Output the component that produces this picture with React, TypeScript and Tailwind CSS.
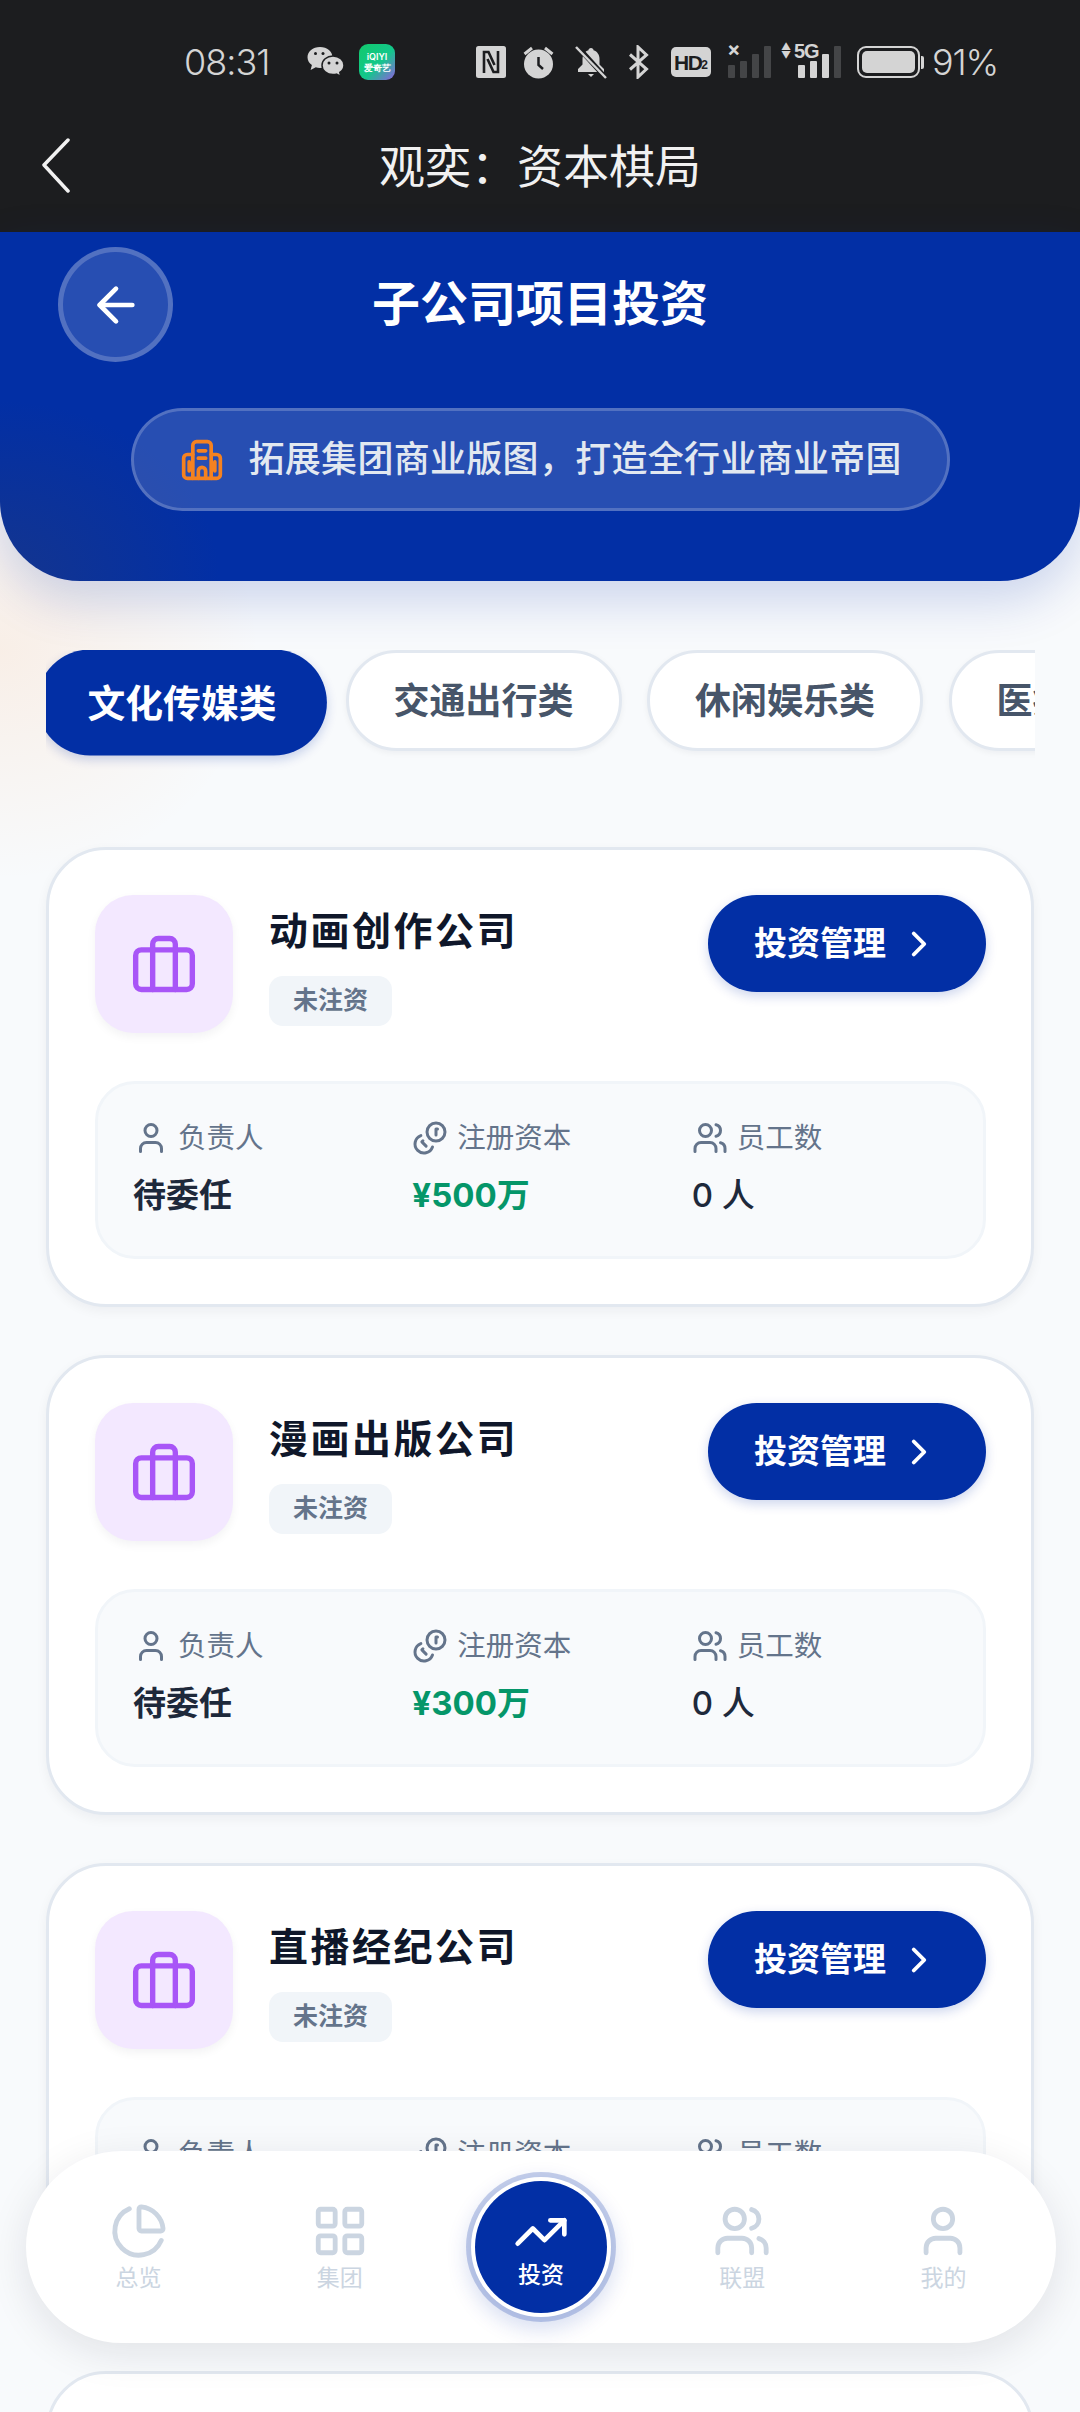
import { ArrowLeft, ChevronRight, Coins, User, Users, TrendingUp, ChartPie, LayoutGrid } from "lucide-react";

const FONT = "font-['Inter','Noto_Sans_CJK_SC',sans-serif]";

function Wechat() {
  return (
    <svg width="40" height="34" viewBox="0 0 40 34" className="shrink-0">
      <path d="M14 2C6.8 2 1.5 6.6 1.5 12.2c0 3.2 1.7 6 4.4 7.9L4.6 25l5.2-2.7c1.3.4 2.7.6 4.2.6 7.2 0 12.5-4.7 12.5-10.7C26.500 6.600 21.200 2 14 2z" fill="#d4d4d4" />
      <path d="M27 11c-6.300 0-11 4.100-11 9.300s4.700 9.300 11 9.300c1.200 0 2.400-.2 3.500-.5l4.300 2.400-1-4.100c2.700-1.700 4.200-4.200 4.200-7.100C38 15.100 33.300 11 27 11z" fill="#d4d4d4" stroke="#1c1d1f" strokeWidth="1.5" />
      <circle cx="9.500" cy="8.500" r="1.500" fill="#1c1d1f" />
      <circle cx="17" cy="8.500" r="1.500" fill="#1c1d1f" />
      <circle cx="23" cy="18" r="1.500" fill="#1c1d1f" />
      <circle cx="31" cy="18" r="1.500" fill="#1c1d1f" />
    </svg>
  );
}

function Iqiyi() {
  return (
    <div className="flex h-[36px] w-[36px] shrink-0 flex-col items-center justify-center rounded-[9px] bg-[linear-gradient(135deg,#12c96c_0%,#13c78b_55%,#8f5fe0_100%)] text-white">
      <span className="text-[9px] leading-[11px] font-semibold">iQIYI</span>
      <span className="text-[9px] leading-[11px] font-bold">爱奇艺</span>
    </div>
  );
}

function Nfc() {
  return (
    <svg width="30" height="32" viewBox="0 0 30 32" className="shrink-0">
      <rect x="0" y="0" width="30" height="32" rx="2.500" fill="#d4d4d4" />
      <path d="M8 27V6h4.500l6 13" fill="none" stroke="#1c1d1f" strokeWidth="2.600" />
      <path d="M22 5v21h-4.500l-6-13" fill="none" stroke="#1c1d1f" strokeWidth="2.600" />
    </svg>
  );
}

function Alarm() {
  return (
    <svg width="31" height="34" viewBox="0 0 31 34" className="shrink-0">
      <circle cx="15.500" cy="19" r="14.500" fill="#d4d4d4" />
      <path d="M15.500 12v8l4.500 4" fill="none" stroke="#1c1d1f" strokeWidth="2.500" />
      <path d="M1.500 9 9 3M29.500 9 22 3" stroke="#d4d4d4" strokeWidth="3" />
    </svg>
  );
}

function BellOff() {
  return (
    <svg width="32" height="34" viewBox="0 0 32 34" className="shrink-0">
      <path d="M16 3c-1.500 0-2.500 1-2.500 2.200C9.500 6.500 7.500 10 7.500 14v5.500L3 24v3h26v-3l-4.500-4.500V14c0-4-2-7.500-6-8.800C18.500 4 17.500 3 16 3z" fill="#d4d4d4" />
      <path d="M13 29h6l-3 3z" fill="#d4d4d4" />
      <path d="M2 1 31 33" stroke="#1c1d1f" strokeWidth="5" />
      <path d="M1 2 31 33" stroke="#d4d4d4" strokeWidth="2.500" />
    </svg>
  );
}

function Bluetooth() {
  return (
    <svg width="21" height="34" viewBox="0 0 21 34" className="shrink-0">
      <path d="M2 9.500 18.500 24 10 32V2l8.500 8L2 24.500" fill="none" stroke="#d4d4d4" strokeWidth="3" />
    </svg>
  );
}

function Hd() {
  return (
    <div className="flex h-[30px] w-[40px] shrink-0 items-center justify-center rounded-[5px] bg-[#d4d4d4] text-[#1c1d1f] font-['Liberation_Sans',sans-serif]">
      <span className="text-[21px] leading-none font-bold tracking-[-1.500px]">HD</span>
      <span className="mt-[5px] text-[12px] leading-none font-bold">2</span>
    </div>
  );
}

function Bars({ on }: { on: number }) {
  const hs = [13, 17, 24, 32];
  return (
    <div className="flex items-end gap-[5px]">
      {hs.map((h, i) => (
        <div key={i} style={{ height: h }} className={i < on ? "w-[7px] rounded-[1px] bg-[#d4d4d4]" : "w-[7px] rounded-[1px] bg-[#444547]"} />
      ))}
    </div>
  );
}

function StatusBar() {
  return (
    <div className="flex h-[124px] items-center pl-[184px] text-[#d4d4d4] font-['Inter',sans-serif]">
      <span className="w-[88px] text-[36px] leading-none font-light tracking-[-1px]">08:31</span>
      <div className="ml-[34px]"><Wechat /></div>
      <div className="ml-[13px]"><Iqiyi /></div>
      <div className="ml-[81px]"><Nfc /></div>
      <div className="ml-[17px]"><Alarm /></div>
      <div className="ml-[21px]"><BellOff /></div>
      <div className="ml-[21px]"><Bluetooth /></div>
      <div className="ml-[22px]"><Hd /></div>
      <div className="relative ml-[17px] h-[32px] w-[43px]">
        <div className="absolute bottom-0 left-0"><Bars on={0} /></div>
        <span className="absolute left-[-1px] top-[-7px] text-[20px] leading-none font-bold">×</span>
      </div>
      <div className="relative ml-[10px] flex h-[32px] w-[60px] justify-end">
        <div className="mt-auto"><Bars on={3} /></div>
        <span className="absolute left-[0px] top-[-4px] text-[10px] leading-[9px]">▲<br />▼</span>
        <span className="absolute left-[13px] top-[-5px] text-[20px] leading-none font-bold tracking-[-1px] font-['Liberation_Sans',sans-serif]">5G</span>
      </div>
      <div className="ml-[16px] flex items-center">
        <div className="h-[32px] w-[63px] rounded-[9px] border-[2px] border-[#d4d4d4] p-[3px]">
          <div className="h-full w-full rounded-[5px] bg-[#d4d4d4]" />
        </div>
        <div className="ml-[1px] h-[13px] w-[3px] rounded-r-[2px] bg-[#d4d4d4]" />
      </div>
      <span className="ml-[8px] text-[36px] leading-none font-light tracking-[-1.200px]">91%</span>
    </div>
  );
}

function BuildingIcon() {
  return (
    <svg width="46" height="44" viewBox="0 0 24 24" fill="none" stroke="#f58220" strokeWidth="2" strokeLinecap="round" strokeLinejoin="round" className="shrink-0">
      <path d="M7 22V4a2 2 0 0 1 2-2h6a2 2 0 0 1 2 2v18" />
      <path d="M7 9H4a2 2 0 0 0-2 2v9a2 2 0 0 0 2 2h16a2 2 0 0 0 2-2v-9a2 2 0 0 0-2-2h-3" />
      <path d="M10 7h4M10 11h4M10 22v-4a2 2 0 0 1 4 0v4M5 13v5M19 13v5" />
    </svg>
  );
}

function BagIcon() {
  return (
    <svg width="68" height="68" viewBox="0 0 24 24" fill="none" stroke="#a855f7" strokeWidth="1.900" strokeLinecap="round" strokeLinejoin="round">
      <rect x="2" y="7" width="20" height="14" rx="2" />
      <path d="M16 21V5a2 2 0 0 0-2-2h-4a2 2 0 0 0-2 2v16" />
    </svg>
  );
}

function Info({ icon, label, value, valueClass }: { icon: React.ReactNode; label: string; value: string; valueClass: string }) {
  return (
    <div className="flex flex-col">
      <div className="flex h-[36px] items-center gap-[9px] text-[#64748b]">
        {icon}
        <span className="text-[28.500px] leading-none">{label}</span>
      </div>
      <div className={`mt-[21px] text-[33px] leading-[36px] ${valueClass}`}>{value}</div>
    </div>
  );
}

function Card({ name, capital }: { name: string; capital: string }) {
  return (
    <div className="h-[460px] shrink-0 rounded-[60px] border-[3px] border-[#e2e8f0] bg-white pl-[46px] pr-[45px] pt-[45px] shadow-[0_4px_12px_rgba(15,23,42,0.05)]">
      <div className="flex items-start">
        <div className="flex h-[138px] w-[138px] shrink-0 items-center justify-center rounded-[38px] bg-[#f3e8ff] shadow-[0_4px_10px_rgba(15,23,42,0.05)]">
          <BagIcon />
        </div>
        <div className="ml-[36px] flex flex-col items-start">
          <div className="mt-[12px] text-[39px] leading-[48px] font-bold tracking-[2.500px] text-[#0f172a]">{name}</div>
          <div className="mt-[21px] flex h-[50px] w-[123px] items-center justify-center rounded-[14px] bg-[#f1f5f9] text-[25px] font-semibold text-[#64748b]">未注资</div>
        </div>
        <div className="ml-auto flex h-[97px] w-[278px] items-center justify-center gap-[12px] rounded-full bg-[#022fa5] text-white shadow-[0_4px_12px_rgba(2,47,165,0.2)]">
          <span className="text-[33px] font-bold">投资管理</span>
          <ChevronRight size={42} strokeWidth={2.200} />
        </div>
      </div>
      <div className="mt-[48px] grid h-[178px] grid-cols-3 gap-[23px] rounded-[40px] border-[3px] border-[#f1f5f9] bg-[#f8fafc] pl-[35px] pr-[35px] pt-[36px]">
        <Info icon={<User size={36} strokeWidth={2} />} label="负责人" value="待委任" valueClass="font-bold text-[#1e293b]" />
        <Info icon={<Coins size={36} strokeWidth={2} className="-scale-x-100" />} label="注册资本" value={capital} valueClass="font-bold text-[#059669]" />
        <Info icon={<Users size={36} strokeWidth={2} />} label="员工数" value="0 人" valueClass="font-medium text-[#1e293b]" />
      </div>
    </div>
  );
}

function NavItem({ icon, label }: { icon: React.ReactNode; label: string }) {
  return (
    <div className="flex flex-col items-center text-[#cbd5e1]">
      {icon}
      <span className="mt-[3px] text-[23px] leading-[30px]">{label}</span>
    </div>
  );
}

export default function App() {
  const tabs = ["交通出行类", "休闲娱乐类", "医疗健康类"];
  return (
    <div className={`relative flex h-[2412px] w-[1080px] flex-col overflow-hidden bg-[#f8fafc] ${FONT}`}>
      <div className="pointer-events-none absolute left-[-260px] top-[420px] h-[460px] w-[520px] bg-[radial-gradient(closest-side,rgba(251,146,60,0.11),rgba(251,146,60,0))]" />

      <div className="z-10 h-[232px] shrink-0 bg-[#1c1d1f]">
        <StatusBar />
        <div className="relative flex h-[84px] items-center justify-center text-[#f1f1f1]">
          <svg width="34" height="56" viewBox="0 0 34 56" fill="none" stroke="#f1f1f1" strokeWidth="3.500" strokeLinecap="round" strokeLinejoin="round" className="absolute left-[39px] top-[13px]">
            <path d="M29 3 5 28l24 26" />
          </svg>
          <span className="text-[46px] leading-none">观奕：资本棋局</span>
        </div>
      </div>

      <div className="z-10 h-[349px] shrink-0 rounded-b-[80px] bg-[#022fa5] bg-[radial-gradient(ellipse_220px_180px_at_0%_100%,#14358e_0%,#022fa5_100%)] shadow-[0_20px_50px_rgba(2,47,165,0.18)]">
        <div className="grid grid-cols-[1fr_auto_1fr] items-center pt-[15px]">
          <div className="pl-[58px]">
            <div className="flex h-[115px] w-[115px] items-center justify-center rounded-full border-[5px] border-white/20 bg-white/15 text-white">
              <ArrowLeft size={56} strokeWidth={2} />
            </div>
          </div>
          <span className="-mt-[2px] text-[48px] leading-none font-bold text-white">子公司项目投资</span>
          <span />
        </div>
        <div className="mx-auto mt-[46px] flex h-[103px] w-[819px] items-center rounded-full border-[3px] border-white/20 bg-white/15 pl-[45px]">
          <BuildingIcon />
          <span className="-mt-[2px] ml-[24px] text-[36px] leading-none font-medium tracking-[0.300px] text-[#e2e8f0]">拓展集团商业版图，打造全行业商业帝国</span>
        </div>
      </div>

      <div className="z-10 ml-[46px] mt-[69px] h-[130px] w-[989px] shrink-0 overflow-hidden">
        <div className="ml-[-2px] flex w-[1300px] gap-[25.500px]">
          <div className="flex h-[101px] w-[276px] shrink-0 translate-y-[2px] scale-105 items-center justify-center rounded-full bg-[#022fa5] text-[36px] font-bold text-white shadow-[0_4px_10px_rgba(2,47,165,0.2)]">文化传媒类</div>
          {tabs.map((t) => (
            <div key={t} className="flex h-[101px] w-[276px] shrink-0 items-center justify-center rounded-full border-[3px] border-[#e2e8f0] bg-white text-[36px] font-bold text-[#475569] shadow-[0_2px_6px_rgba(15,23,42,0.05)]">{t}</div>
          ))}
        </div>
      </div>

      <div className="z-10 mx-[46px] mt-[67px] flex flex-col gap-[48px]">
        <Card name="动画创作公司" capital="¥500万" />
        <Card name="漫画出版公司" capital="¥300万" />
        <Card name="直播经纪公司" capital="¥200万" />
        <div className="h-[460px] shrink-0 rounded-[60px] border-[3px] border-[#e2e8f0] bg-white" />
      </div>

      <div className="absolute left-[26px] top-[2151px] z-30 grid h-[192px] w-[1030px] grid-cols-5 items-center rounded-full bg-white px-[12px] shadow-[0_10px_40px_rgba(15,23,42,0.1)]">
        <NavItem icon={<ChartPie size={58} strokeWidth={2} />} label="总览" />
        <NavItem icon={<LayoutGrid size={58} strokeWidth={2} />} label="集团" />
        <div className="flex justify-center">
          <div className="flex h-[132px] w-[132px] flex-col items-center justify-center rounded-full bg-[#022fa5] text-white shadow-[0_0_0_4px_#ffffff,0_0_0_9px_rgba(2,47,165,0.22),0_8px_20px_9px_rgba(2,47,165,0.15)]">
            <TrendingUp size={56} strokeWidth={2} />
            <span className="text-[23px] leading-[30px] font-medium">投资</span>
          </div>
        </div>
        <NavItem icon={<Users size={58} strokeWidth={2} />} label="联盟" />
        <NavItem icon={<User size={58} strokeWidth={2} />} label="我的" />
      </div>
    </div>
  );
}
